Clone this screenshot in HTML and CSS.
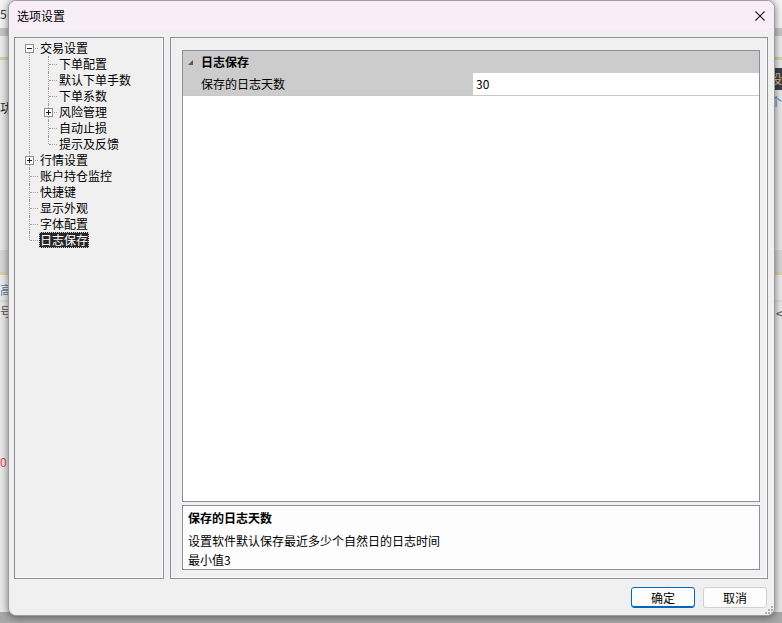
FILE: index.html
```html
<!DOCTYPE html>
<html lang="zh-CN">
<head>
<meta charset="utf-8">
<title>选项设置</title>
<link rel="stylesheet" href="styles.css">
</head>
<body>
<div class="desktop">
  <span class="bit bit-5">5</span>
  <span class="bit bit-gong">功</span>
  <span class="bit bit-gao">高</span>
  <span class="bit bit-hao">号</span>
  <span class="bit bit-zero">0</span>
  <span class="bit bit-dark">设</span>
  <span class="bit bit-ge">个</span>
  <span class="bit bit-lt">&lt;</span>

  <div class="dialog">
    <div class="titlebar">
      <span class="title">选项设置</span>
      <span class="spacer"></span>
      <svg class="close" width="10" height="10" viewBox="0 0 10 10"><path d="M0.5 0.5 L9.5 9.5 M9.5 0.5 L0.5 9.5" stroke="#1a1a1a" stroke-width="1.1" fill="none"/></svg>
    </div>
    <div class="body">
      <div class="panels">
        <div class="tree-panel">
          <ul class="tree">
            <li class="first">
              <svg class="exp" width="9" height="9" viewBox="0 0 9 9"><rect x="0.5" y="0.5" width="8" height="8" fill="#fff" stroke="#8e8e8e"/><path d="M2 4.5 H7" stroke="#1c1c1c"/></svg>
              <span class="label">交易设置</span>
              <ul class="children">
                <li><span class="label">下单配置</span></li>
                <li><span class="label">默认下单手数</span></li>
                <li><span class="label">下单系数</span></li>
                <li>
                  <svg class="exp" width="9" height="9" viewBox="0 0 9 9"><rect x="0.5" y="0.5" width="8" height="8" fill="#fff" stroke="#8e8e8e"/><path d="M2 4.5 H7 M4.5 2 V7" stroke="#1c1c1c"/></svg>
                  <span class="label">风险管理</span>
                </li>
                <li><span class="label">自动止损</span></li>
                <li class="last"><span class="label">提示及反馈</span></li>
              </ul>
            </li>
            <li>
              <svg class="exp" width="9" height="9" viewBox="0 0 9 9"><rect x="0.5" y="0.5" width="8" height="8" fill="#fff" stroke="#8e8e8e"/><path d="M2 4.5 H7 M4.5 2 V7" stroke="#1c1c1c"/></svg>
              <span class="label">行情设置</span>
            </li>
            <li><span class="label">账户持仓监控</span></li>
            <li><span class="label">快捷键</span></li>
            <li><span class="label">显示外观</span></li>
            <li><span class="label">字体配置</span></li>
            <li class="last"><span class="label selected">日志保存</span></li>
          </ul>
        </div>
        <div class="content-panel">
          <div class="grid">
            <div class="cat-row">
              <svg class="tri" width="5" height="5" viewBox="0 0 5 5"><polygon points="5,0 5,5 0,5" fill="#5a5a5a"/></svg>
              <span class="cat-label">日志保存</span>
            </div>
            <div class="prop-row">
              <span class="prop-name">保存的日志天数</span>
              <span class="prop-value">30</span>
            </div>
          </div>
          <div class="desc">
            <div class="desc-title">保存的日志天数</div>
            <div class="desc-line">设置软件默认保存最近多少个自然日的日志时间</div>
            <div class="desc-line">最小值3</div>
          </div>
        </div>
      </div>
      <div class="buttons">
        <button class="btn primary">确定</button>
        <button class="btn">取消</button>
      </div>
    </div>
    <svg class="grip" width="8" height="8" viewBox="0 0 8 8">
      <rect x="6" y="0" width="2" height="2" fill="#b4b4b4"/>
      <rect x="3" y="3" width="2" height="2" fill="#b4b4b4"/>
      <rect x="6" y="3" width="2" height="2" fill="#b4b4b4"/>
      <rect x="0" y="6" width="2" height="2" fill="#b4b4b4"/>
      <rect x="3" y="6" width="2" height="2" fill="#b4b4b4"/>
      <rect x="6" y="6" width="2" height="2" fill="#b4b4b4"/>
    </svg>
  </div>
</div>
</body>
</html>
```

FILE: styles.css
```css
html, body {
  margin: 0;
  padding: 0;
}

body {
  width: 782px;
  height: 623px;
  overflow: hidden;
  font-family: "Noto Sans CJK SC", "Noto Sans", sans-serif;
  font-size: 12px;
  color: #000;
}

.desktop {
  position: relative;
  width: 782px;
  height: 623px;
  overflow: hidden;
  background: linear-gradient(to bottom,
    #f4f4f4 0 28px,
    #c6c6c6 28px 36px,
    #ececec 36px 57px,
    #d9d0aa 57px 60px,
    #e8e8e8 60px 250px,
    #d8d8d8 250px 272px,
    #dcd3ae 272px 275px,
    #ececec 275px 300px,
    #dedede 300px 302px,
    #e9e9e9 302px 612px,
    #a9a9a9 612px 623px);
}

.bit {
  position: absolute;
  font-size: 12px;
  line-height: 14px;
}

.bit-5 { left: 0; top: 7px; color: #333; }
.bit-gong { left: 0; top: 101px; color: #222; }
.bit-gao { left: 0; top: 283px; color: #5b7ea6; }
.bit-hao { left: 0; top: 305px; color: #555; }
.bit-zero { left: 0; top: 455px; color: #e0455c; }
.bit-dark { left: 770px; top: 68px; width: 12px; height: 22px; line-height: 22px; background: #3b404c; color: #e8c98a; }
.bit-ge { left: 770px; top: 95px; color: #4f7fb5; }
.bit-lt { left: 776px; top: 306px; color: #444; }

.dialog {
  position: absolute;
  left: 8px;
  top: 0;
  width: 767px;
  height: 616px;
  box-sizing: border-box;
  border: 1px solid #9c9c9c;
  border-radius: 8px;
  background: #f0f0f0;
  overflow: hidden;
  box-shadow: 0 0 6px rgba(0, 0, 0, 0.3), 0 3px 10px rgba(0, 0, 0, 0.25);
  display: flex;
  flex-direction: column;
}

.titlebar {
  height: 30px;
  background: #f8eef7;
  display: flex;
  align-items: center;
  padding-left: 8px;
  padding-right: 9px;
  flex: none;
}

.title {
  line-height: 16px;
  margin-top: -1px;
}

.spacer {
  flex: 1;
}

.close {
  display: block;
}

.body {
  padding: 6px 6px 0 5px;
  display: flex;
  flex-direction: column;
}

.panels {
  display: flex;
  gap: 6px;
  height: 542px;
}

.tree-panel {
  width: 150px;
  box-sizing: border-box;
  border: 1px solid #8e8f94;
  box-shadow: inset -1px -1px 0 #ffffff;
  background: #f0f0f0;
  padding-top: 2px;
}

.tree, .children {
  list-style: none;
  margin: 0;
  padding: 0;
}

.tree li {
  position: relative;
  line-height: 16px;
  white-space: nowrap;
}

.tree > li {
  padding-left: 24px;
}

.tree > li::before {
  content: "";
  position: absolute;
  left: 14px;
  top: 0;
  bottom: 0;
  border-left: 1px dotted #a0a0a0;
}

.tree > li::after {
  content: "";
  position: absolute;
  left: 15px;
  top: 8px;
  width: 8px;
  border-top: 1px dotted #a0a0a0;
}

.tree > li.first::before {
  top: 8px;
}

.tree > li.last::before {
  bottom: auto;
  height: 8px;
}

.children > li {
  padding-left: 19px;
}

.children > li::before {
  content: "";
  position: absolute;
  left: 9px;
  top: 0;
  bottom: 0;
  border-left: 1px dotted #a0a0a0;
}

.children > li::after {
  content: "";
  position: absolute;
  left: 10px;
  top: 8px;
  width: 8px;
  border-top: 1px dotted #a0a0a0;
}

.children > li.last::before {
  bottom: auto;
  height: 8px;
}

.exp {
  position: absolute;
  top: 4px;
  left: 10px;
  z-index: 1;
  display: block;
}

.children .exp {
  left: 5px;
}

.label {
  display: inline-block;
  padding: 0 1px;
  height: 16px;
  line-height: 16px;
  vertical-align: top;
}

.label.selected {
  background: #262626;
  color: #ffffff;
  outline: 1px dotted #d0d0d0;
  outline-offset: -1px;
}

.content-panel {
  width: 598px;
  box-sizing: border-box;
  border: 1px solid #8e8f94;
  box-shadow: inset -1px -1px 0 #ffffff;
  padding: 12px 7px 0 11px;
  display: flex;
  flex-direction: column;
}

.grid {
  height: 452px;
  box-sizing: border-box;
  border: 1px solid #8f8f95;
  background: #ffffff;
}

.cat-row {
  height: 22px;
  background: #cccccc;
  display: flex;
  align-items: center;
}

.tri {
  display: block;
  margin-left: 5px;
  margin-right: 8px;
}

.cat-label {
  font-weight: bold;
  line-height: 22px;
}

.prop-row {
  height: 23px;
  box-sizing: border-box;
  border-bottom: 1px solid #c9c9c9;
  display: flex;
}

.prop-name {
  width: 290px;
  box-sizing: border-box;
  background: #cccccc;
  padding-left: 18px;
  line-height: 22px;
}

.prop-value {
  flex: 1;
  background: #ffffff;
  padding-left: 3px;
  line-height: 22px;
}

.desc {
  margin-top: 3px;
  height: 65px;
  box-sizing: border-box;
  border: 1px solid #8f8f95;
  background: #fdfdfd;
  padding: 2px 5px 0;
}

.desc-title {
  font-weight: bold;
  line-height: 20px;
  margin-bottom: 3px;
}

.desc-line {
  line-height: 19px;
}

.buttons {
  display: flex;
  justify-content: flex-end;
  gap: 8px;
  margin-top: 8px;
  padding-right: 1px;
}

.btn {
  width: 64px;
  height: 21px;
  box-sizing: border-box;
  border: 1px solid #d0d0d0;
  border-radius: 3px;
  background: #fdfdfd;
  font-family: "Noto Sans CJK SC", "Noto Sans", sans-serif;
  font-size: 12px;
  line-height: 17px;
  padding: 0;
  color: #000;
}

.btn.primary {
  border-color: #0067c0;
  box-shadow: inset 0 -1px 0 #0067c0;
}

.grip {
  position: absolute;
  right: 1px;
  bottom: 1px;
  display: block;
}
```
